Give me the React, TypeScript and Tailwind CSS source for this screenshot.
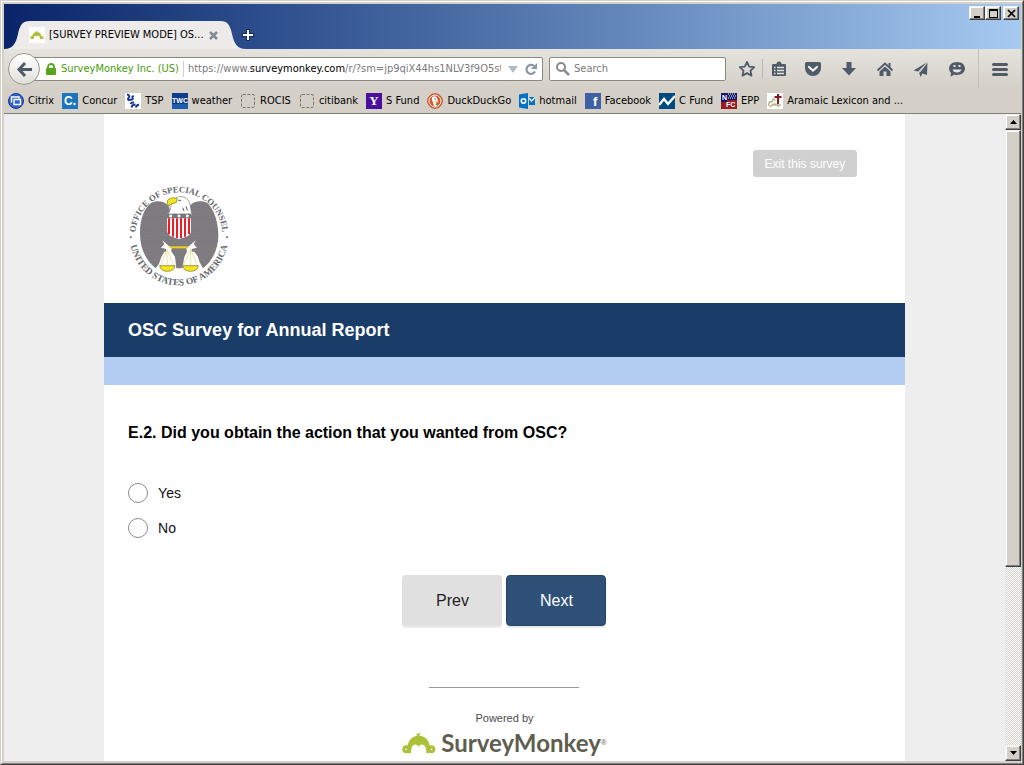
import { useState } from 'react';
import type { ReactNode } from 'react';

// ------------------------------------------------------------
// Small drawings: bookmarks, toolbar glyphs, logos
// ------------------------------------------------------------

const MonkeyMark = ({ className }: { className: string }) => (
  <svg className={className} viewBox="12 10 102 66" fill="#a9c239">
    <path d="M28 68C26 38 40 23 59 21L52 15L59 16L65 10L65 21C84 23 98 38 96 68Q96 74 85 74Q86 52 75 48Q67 46 62 54Q57 46 49 48Q38 52 39 74Q28 74 28 68Z" />
    <circle cx="25" cy="62" r="12" />
    <circle cx="100" cy="62" r="12" />
    <circle cx="24" cy="62" r="2.5" fill="#fff" />
    <circle cx="101" cy="62" r="2.5" fill="#fff" />
  </svg>
);

function Seal() {
  return (
    <svg className="block h-[102px] w-[102px]" viewBox="9 12 306 306" role="img" aria-label="Office of Special Counsel seal">
      <defs>
        <path id="sealTop" d="M31 165A131 131 0 0 1 293 165" />
        <path id="sealBottom" d="M14 165A148 148 0 0 0 310 165" />
        <pattern id="feather" width="9" height="9" patternUnits="userSpaceOnUse">
          <rect width="9" height="9" fill="#7f7d80" />
          <rect x="1" y="2" width="2" height="3" fill="#86708d" />
          <rect x="5" y="6" width="3" height="2" fill="#73727c" />
        </pattern>
      </defs>
      <g fill="#66666b" fontFamily="Liberation Serif, serif" fontWeight="bold" textAnchor="middle">
        <text fontSize="26"><textPath href="#sealTop" startOffset="50%">OFFICE OF SPECIAL COUNSEL</textPath></text>
        <text fontSize="28"><textPath href="#sealBottom" startOffset="50%">UNITED STATES OF AMERICA</textPath></text>
      </g>
      <circle cx="17" cy="169" r="3" fill="#66666b" />
      <circle cx="306" cy="169" r="3" fill="#66666b" />
      {/* wings and tail */}
      <path
        d="M134 106C132 98 138 86 130 74C116 58 92 58 78 66C54 86 44 120 45 162C46 204 64 240 92 262L102 248L108 230L118 212L140 212L150 228L154 262H172L178 228L186 212H208L218 226L224 244L234 262C262 240 279 206 280 165C280 124 268 86 247 66C232 58 208 58 194 74C194 86 200 98 196 106Z"
        fill="url(#feather)"
      />
      {/* head */}
      <path d="M128 100C134 94 138 82 138 72L154 50C168 43 184 48 191 60C199 74 196 90 202 103L190 98L182 106L170 98L160 106L150 98L138 105Z" fill="#fff" stroke="#77777c" strokeWidth="2" />
      <path d="M127 60C132 50 148 48 157 53L154 65L140 68L132 75Q124 69 127 60Z" fill="#f4e51c" stroke="#75702c" strokeWidth="2" />
      <path d="M160 58H168M173 80L177 90M183 76L187 88" stroke="#555" strokeWidth="3" />
      {/* shield */}
      <path d="M126 98H198V153Q197 166 162 174Q128 166 127 153Z" fill="#fff" />
      <path d="M126 98H198V112H126Z" fill="#77757c" />
      <path d="M133 105H141M158 105H166M183 105H191" stroke="#fff" strokeWidth="7" />
      <path d="M132 112V160M144 112V167M156 112V171M168 112V171M180 112V167M192 112V160" stroke="#ee1c24" strokeWidth="6" />
      {/* talons and scales */}
      <path d="M112 178L118 190L108 200L124 204L124 214H138L140 202L128 192ZM212 178L206 190L216 200L200 204L200 214H186L184 202L196 192Z" fill="#fff" />
      <path d="M134 199H190" stroke="#f1d51b" strokeWidth="6" />
      <path d="M126 206L106 256M126 206L148 256M126 206V256M197 206L174 256M197 206L218 256M197 206V256" stroke="#ece3a0" strokeWidth="3" />
      <path d="M104 254H150Q147 271 127 271Q107 271 104 254ZM173 254H220Q217 271 197 271Q176 271 173 254Z" fill="#f4e51c" stroke="#75702c" strokeWidth="2" />
    </svg>
  );
}

const Square = ({ fill, children }: { fill: string; children?: ReactNode }) => (
  <svg className="h-4 w-4 shrink-0" viewBox="0 0 16 16">
    <rect width="16" height="16" fill={fill} />
    {children}
  </svg>
);

const Dashed = () => (
  <Square fill="none">
    <rect x="1.5" y="1.5" width="13" height="13" rx="1.5" fill="none" stroke="#77756f" strokeDasharray="3 1.5" />
  </Square>
);

const bookmarks: { label: string; icon: ReactNode }[] = [
  {
    label: 'Citrix',
    icon: (
      <Square fill="none">
        <circle cx="8" cy="8" r="7.5" fill="#3161c9" stroke="#173a93" />
        <path d="M3.5 9.5V4H11V5.5M6 6.5H12.5V11.5H6Z" fill="none" stroke="#fff" strokeWidth="1.4" />
      </Square>
    ),
  },
  {
    label: 'Concur',
    icon: (
      <Square fill="#1b76bd">
        <text x="2" y="12" fill="#fff" fontFamily="Liberation Sans" fontWeight="bold" fontSize="12">C</text>
        <circle cx="12.5" cy="11" r="1.2" fill="#fff" />
      </Square>
    ),
  },
  {
    label: 'TSP',
    icon: (
      <Square fill="#fff">
        <path d="M2 1.5Q5 2 4 4.5Q2 6 4 7Q8 7 8 5M8.5 2.5Q8 4 6.5 4.5" fill="none" stroke="#19388f" strokeWidth="2" />
        <path d="M5.5 11Q6.5 9 9 9.5M6.5 14.5Q7 11.5 10.5 11.5M11 14.5Q11 12.5 14 11.5" fill="none" stroke="#19388f" strokeWidth="2" />
      </Square>
    ),
  },
  {
    label: 'weather',
    icon: (
      <Square fill="#0c3d8f">
        <rect y="11" width="16" height="5" fill="#1c5dac" />
        <text x="8" y="10" fill="#fff" fontFamily="Liberation Sans" fontWeight="bold" fontSize="7" textAnchor="middle">TWC</text>
      </Square>
    ),
  },
  { label: 'ROCIS', icon: <Dashed /> },
  { label: 'citibank', icon: <Dashed /> },
  {
    label: 'S Fund',
    icon: (
      <Square fill="#4b0f9e">
        <text x="8" y="12" fill="#fff" fontFamily="Liberation Serif" fontWeight="bold" fontSize="13" textAnchor="middle">Y</text>
      </Square>
    ),
  },
  {
    label: 'DuckDuckGo',
    icon: (
      <Square fill="none">
        <circle cx="8" cy="8" r="7.3" fill="#de5833" stroke="#c8411c" />
        <circle cx="8" cy="8" r="6" fill="none" stroke="#fff" />
        <path d="M5 4Q9 2 10.5 6L11 9L9 10L10 13H7Q6 9 5 7Z" fill="#fff" />
        <path d="M8 8L12 8.5L8.5 10Z" fill="#fbb034" />
        <path d="M8 11L11 10.5L10.5 13Z" fill="#4eaa3b" />
        <circle cx="8" cy="6" r="0.7" fill="#244a7c" />
      </Square>
    ),
  },
  {
    label: 'hotmail',
    icon: (
      <Square fill="none">
        <path d="M0 1.5L9 0V16L0 14.5Z" fill="#0072c6" />
        <circle cx="4.5" cy="8" r="2.2" fill="none" stroke="#fff" strokeWidth="1.6" />
        <path d="M10 4H16V12H10Z" fill="#0072c6" />
        <path d="M10 5L12.5 8L16 4.5" fill="none" stroke="#fff" strokeWidth="1.2" />
      </Square>
    ),
  },
  {
    label: 'Facebook',
    icon: (
      <Square fill="#4060a5">
        <text x="8" y="13" fill="#fff" fontFamily="Liberation Sans" fontWeight="bold" fontSize="13">f</text>
      </Square>
    ),
  },
  {
    label: 'C Fund',
    icon: (
      <Square fill="#004a80">
        <path d="M0 12L5 6L9 11L16 3" fill="none" stroke="#fff" strokeWidth="2.4" />
      </Square>
    ),
  },
  {
    label: 'EPP',
    icon: (
      <Square fill="#15176b">
        <path d="M7 1H15M8 3H15M7 5H15" stroke="#fff" strokeDasharray="1 1" />
        <path d="M6 7H16V16H0V9H6Z" fill="#981b22" />
        <g fill="#fff" fontFamily="Liberation Sans" fontWeight="bold" fontSize="7">
          <text x="1" y="7">N</text>
          <text x="5" y="14">FC</text>
        </g>
      </Square>
    ),
  },
  {
    label: 'Aramaic Lexicon and ...',
    icon: (
      <Square fill="#fff">
        <path d="M2 13Q1 8 5 9Q6 3 8 8M3 14Q8 8 12 14M6 12H14" fill="none" stroke="#b9b58f" strokeWidth="1.5" />
        <path d="M11 1V11M7.5 4H14.5" stroke="#8c1420" strokeWidth="2" />
      </Square>
    ),
  },
];

const Glyph = ({ children }: { children: ReactNode }) => (
  <svg className="h-[18px] w-[18px]" viewBox="0 0 18 18" fill="#4f5b68" stroke="none">
    {children}
  </svg>
);

const tools: { name: string; glyph: ReactNode }[] = [
  {
    name: 'Pocket',
    glyph: (
      <Glyph>
        <path d="M2.5 2H15.5Q17 2 17 3.5V8A8 8 0 0 1 1 8V3.5Q1 2 2.5 2Z" />
        <path d="M5 7L9 10.5L13 7" fill="none" stroke="#f2f0ec" strokeWidth="2.2" strokeLinecap="round" />
      </Glyph>
    ),
  },
  { name: 'Downloads', glyph: <Glyph><path d="M6.5 2H11.5V8H16L9 15.5L2 8H6.5Z" /></Glyph> },
  {
    name: 'Home',
    glyph: (
      <Glyph>
        <path d="M2 10L9 3.5L16 10" fill="none" stroke="#4f5b68" strokeWidth="1.8" strokeLinecap="round" />
        <path d="M12.5 3H14.5V8L12.5 6Z" />
        <path d="M3.5 11.5L9 6.5L14.5 11.5V16H10.5V11.5H7.5V16H3.5Z" />
      </Glyph>
    ),
  },
  {
    name: 'Share',
    glyph: (
      <Glyph>
        <path d="M15.5 2L1.5 10.5L6 11.5ZM15.5 2L7 12.5L8.5 17L10.5 13.5L15 15Z" />
        <path d="M15.5 2L7.5 12.5" stroke="#e0ddd7" />
      </Glyph>
    ),
  },
  {
    name: 'Chat',
    glyph: (
      <Glyph>
        <path d="M9 2C14 2 17 4.8 17 8.5S13.5 15 9 15Q7.5 15 6 14.5Q4 17 2 16Q3.5 15 3 13Q1 11 1 8.5C1 4.8 4.5 2 9 2Z" />
        <path d="M4.5 9.5H13.5Q12.5 12.5 9 12.5T4.5 9.5Z" fill="#e6e3de" />
        <path d="M5.5 6H7.5M10.5 6H12.5" stroke="#e6e3de" strokeWidth="2" />
      </Glyph>
    ),
  },
];

// ------------------------------------------------------------
// Window chrome
// ------------------------------------------------------------

const bevel =
  'flex items-center justify-center bg-[#d4d0c8] border border-t-[#f4f2ee] border-l-[#f4f2ee] border-r-[#404040] border-b-[#404040] shadow-[inset_-1px_-1px_0_#808080,inset_1px_1px_0_#fff]';

function TitleBar() {
  return (
    <div className="flex h-[45px] items-end bg-linear-to-r from-[#0a246a] to-[#a6caf0]">
      <svg className="h-7 w-[26px] shrink-0" viewBox="0 0 26 28">
        <path d="M0 28C9 28 12 22 14 13C16 4 18 0 26 0V28Z" fill="#eeecea" />
      </svg>
      <div className="flex h-7 w-[190px] items-center bg-[#eeecea] text-[11px] leading-4">
        <span className="-ml-px flex h-4 w-4 items-center justify-center bg-white">
          <MonkeyMark className="h-[10px] w-[14px]" />
        </span>
        <span className="ml-1 flex-1 truncate whitespace-nowrap">[SURVEY PREVIEW MODE] OS...</span>
        <button aria-label="Close tab" className="mr-[2px]">
          <svg className="h-[9px] w-[9px]" viewBox="0 0 9 9" stroke="#858a90" strokeWidth="2.5">
            <path d="M1 1L8 8M8 1L1 8" />
          </svg>
        </button>
      </div>
      <svg className="h-7 w-[26px] shrink-0" viewBox="0 0 26 28">
        <path d="M26 28C17 28 14 22 12 13C10 4 8 0 0 0V28Z" fill="#eeecea" />
      </svg>
      <button aria-label="New tab" className="-ml-1 mb-2">
        <svg className="h-3 w-3" viewBox="0 0 12 12">
          <path d="M6 0V12M0 6H12" stroke="#142a60" strokeWidth="4" />
          <path d="M6 1V11M1 6H11" stroke="#fff" strokeWidth="2" />
        </svg>
      </button>
      <div className="mt-[2px] mr-[2px] ml-auto flex self-start">
        <button aria-label="Minimize" className={`${bevel} h-[14px] w-4`}>
          <svg className="h-[9px] w-[9px]" viewBox="0 0 9 9"><path d="M1 7H7V9H1Z" /></svg>
        </button>
        <button aria-label="Maximize" className={`${bevel} h-[14px] w-4`}>
          <svg className="h-[9px] w-[9px]" viewBox="0 0 9 9"><path d="M0 0H9V9H0ZM1 2V8H8V2Z" fillRule="evenodd" /></svg>
        </button>
        <button aria-label="Close" className={`${bevel} ml-[2px] h-[14px] w-4`}>
          <svg className="h-[9px] w-[9px]" viewBox="0 0 9 9"><path d="M1 1L8 8M8 1L1 8" stroke="#000" strokeWidth="1.7" /></svg>
        </button>
      </div>
    </div>
  );
}

function NavBar() {
  const [path, setPath] = useState('/r/?sm=jp9qiX44hs1NLV3f9O5sth');
  const [query, setQuery] = useState('');

  return (
    <div className="flex h-10 items-center bg-linear-to-b from-[#e6e3de] to-[#d4d0c8] pl-1 text-[11px]">
      <button aria-label="Back" className="z-10 flex h-8 w-8 shrink-0 items-center justify-center rounded-full border border-[#9a9893] bg-linear-to-b from-white to-[#e2dfda]">
        <svg className="h-[15px] w-[15px]" viewBox="0 0 15 15" fill="none" stroke="#4f5b68" strokeWidth="3">
          <path d="M8 1L2 7.5L8 14M2.5 7.5H15" />
        </svg>
      </button>
      <div className="-ml-2 flex h-6 min-w-0 flex-1 items-center rounded-r-xs border border-[#8a8883] bg-white pl-[13px] text-[#7a7a7a]">
        <svg className="h-3 w-[10px] shrink-0" viewBox="0 0 10 12">
          <path d="M2 6V4A3 3 0 0 1 8 4V6" fill="none" stroke="#58a51c" strokeWidth="1.8" />
          <rect y="5" width="10" height="7" rx="1" fill="#58a51c" />
        </svg>
        <span className="ml-[5px] whitespace-nowrap text-[#489b0a]">SurveyMonkey Inc. (US)</span>
        <span className="mx-1 h-4 w-px shrink-0 bg-[#d4d0c8]" />
        <label htmlFor="url" className="whitespace-nowrap">
          https://www.<span className="text-black">surveymonkey.com</span>
        </label>
        <input id="url" value={path} onChange={(e) => setPath(e.target.value)} className="min-w-0 flex-1 bg-transparent outline-none" />
        <svg className="mx-[7px] h-[7px] w-[10px] shrink-0" viewBox="0 0 10 7"><path d="M0 0H10L5 7Z" fill="#b5bac1" /></svg>
        <button aria-label="Reload" className="mr-[5px]">
          <svg className="h-3 w-3" viewBox="0 0 12 12">
            <path d="M10 8.5A4.5 4.5 0 1 1 9 3" fill="none" stroke="#8d96a3" strokeWidth="2.2" />
            <path d="M12 0V6H6Z" fill="#8d96a3" />
          </svg>
        </button>
      </div>
      <div className="ml-[6px] flex h-6 w-[177px] shrink-0 items-center rounded-xs border border-[#8a8883] bg-white pl-[6px]">
        <svg className="h-[14px] w-[14px] shrink-0" viewBox="0 0 14 14" fill="none" stroke="#8b8b8b" strokeWidth="2">
          <circle cx="5" cy="5" r="4" />
          <path d="M8 8L13 13" strokeWidth="2.5" />
        </svg>
        <input aria-label="Search" placeholder="Search" value={query} onChange={(e) => setQuery(e.target.value)} className="ml-1 min-w-0 flex-1 outline-none placeholder:text-[#7a7a7a]" />
      </div>
      <button aria-label="Bookmark this page" className="ml-[6px] flex w-[30px] shrink-0 justify-center">
        <Glyph>
          <path d="M9 2L11.2 6.6L16.2 7.2L12.5 10.6L13.5 15.6L9 13.1L4.5 15.6L5.5 10.6L1.8 7.2L6.8 6.6Z" fill="none" stroke="#4f5b68" strokeWidth="1.8" strokeLinejoin="round" />
        </Glyph>
      </button>
      <span className="h-5 w-px shrink-0 bg-[#bab7b0]" />
      <button aria-label="Show bookmarks" className="flex w-8 shrink-0 justify-center">
        <Glyph>
          <path d="M3 4H6.5Q6.5 1.5 9 1.5T11.5 4H15Q16 4 16 5V15Q16 16 15 16H3Q2 16 2 15V5Q2 4 3 4Z" />
          <path d="M4 7.5H5.5M7 7.5H14M4 10.5H5.5M7 10.5H14M4 13.5H5.5M7 13.5H14" stroke="#e6e3de" strokeWidth="1.5" />
        </Glyph>
      </button>
      {tools.map((tool) => (
        <button key={tool.name} aria-label={tool.name} className="flex w-9 shrink-0 justify-center">
          {tool.glyph}
        </button>
      ))}
      <span className="ml-[3px] h-full w-px shrink-0 bg-[#c4c1ba]" />
      <button aria-label="Open menu" className="flex w-[42px] shrink-0 justify-center">
        <svg className="h-[13px] w-4" viewBox="0 0 16 13" stroke="#4f5b68" strokeWidth="3" strokeLinecap="round">
          <path d="M1.5 1.5H14.5M1.5 6.5H14.5M1.5 11.5H14.5" />
        </svg>
      </button>
    </div>
  );
}

function BookmarksBar() {
  return (
    <nav className="flex h-[25px] items-center gap-2 overflow-hidden border-b border-[#808080] bg-[#d4d0c8] pl-1 text-[11px] leading-4">
      {bookmarks.map((b) => (
        <a key={b.label} href="#" className="flex items-center gap-1 whitespace-nowrap text-black">
          {b.icon}
          {b.label}
        </a>
      ))}
    </nav>
  );
}

function ScrollBar() {
  return (
    <div className="flex w-4 shrink-0 flex-col bg-[conic-gradient(#fff_25%,#d4d0c8_0_50%,#fff_0_75%,#d4d0c8_0)] bg-[length:2px_2px]">
      <button aria-label="Scroll up" className={`${bevel} h-4 w-4 shrink-0`}>
        <svg className="h-1 w-[7px]" viewBox="0 0 7 4"><path d="M3.5 0L7 4H0Z" /></svg>
      </button>
      <div className="flex-1">
        <div className={`${bevel} h-[71%]`} />
      </div>
      <button aria-label="Scroll down" className={`${bevel} h-4 w-4 shrink-0`}>
        <svg className="h-1 w-[7px]" viewBox="0 0 7 4"><path d="M0 0H7L3.5 4Z" /></svg>
      </button>
    </div>
  );
}

// ------------------------------------------------------------
// Survey page
// ------------------------------------------------------------

function Survey() {
  const [answer, setAnswer] = useState('');

  return (
    <main className="mx-auto w-4/5 bg-white font-['Liberation_Sans',Arial,sans-serif]">
      <header className="px-6 pt-9 pb-4">
        <div className="flex justify-end pr-6">
          <button className="h-[27px] w-[104px] rounded-[3px] bg-[#d0d0d0] text-[12px] text-white">Exit this survey</button>
        </div>
        <div className="mt-2">
          <Seal />
        </div>
      </header>
      <h1 className="bg-[#193d68] px-6 py-[15px] text-[18px] leading-6 font-bold text-white">OSC Survey for Annual Report</h1>
      <div className="h-7 bg-[#b3cdf2]" />

      <form className="px-6 pt-9" onSubmit={(e) => e.preventDefault()}>
        <fieldset>
          <legend className="text-[16px] leading-6 font-bold text-black">E.2. Did you obtain the action that you wanted from OSC?</legend>
          <div className="mt-[38px] flex flex-col gap-[15px]">
            {['Yes', 'No'].map((option) => (
              <label key={option} className="flex h-5 items-center gap-[10px] text-[14px] leading-5 text-[#111]">
                <input
                  type="radio"
                  name="answer"
                  value={option}
                  checked={answer === option}
                  onChange={() => setAnswer(option)}
                  className="h-5 w-5 appearance-none rounded-full border border-[#8c8c8c] bg-white checked:border-[6px] checked:border-[#2f5177]"
                />
                {option}
              </label>
            ))}
          </div>
        </fieldset>
        <div className="mt-[37px] flex justify-center gap-1 text-[16px]">
          <button type="button" className="h-[51px] w-[100px] rounded-[4px] bg-[#e0e0e0] text-[#222] shadow-[0_2px_0_#ebebeb]">Prev</button>
          <button type="submit" className="h-[51px] w-[100px] rounded-[4px] border border-[#26456a] bg-[#2f5177] text-white shadow-[0_2px_0_#ebebeb]">Next</button>
        </div>
      </form>

      <footer className="mt-[61px] flex flex-col items-center pb-8">
        <hr className="w-[150px] border-t border-[#999]" />
        <p className="mt-[22px] text-[11px] leading-4 text-[#4a4a4a]">Powered by</p>
        <a href="#" className="mt-[3px] flex items-center text-[#5e5e4f]">
          <MonkeyMark className="h-[22px] w-[34px]" />
          <span className="ml-[5px] font-['Lato',sans-serif] text-[24px] leading-7 font-bold">SurveyMonkey</span>
          <span className="text-[8px] leading-4">®</span>
        </a>
      </footer>
    </main>
  );
}

export default function App() {
  return (
    <div className="h-screen border border-t-[#d4d0c8] border-r-[#404040] border-b-[#404040] border-l-[#d4d0c8] font-['DejaVu_Sans_Condensed','Noto_Sans',sans-serif] text-black">
      <div className="h-full border border-t-white border-r-[#808080] border-b-[#808080] border-l-white">
        <div className="flex h-full flex-col border-2 border-r border-[#d4d0c8]">
          <TitleBar />
          <NavBar />
          <BookmarksBar />
          <div className="flex min-h-0 flex-1">
            <div className="min-w-0 flex-1 overflow-hidden bg-[#eee]">
              <Survey />
            </div>
            <ScrollBar />
          </div>
        </div>
      </div>
    </div>
  );
}
